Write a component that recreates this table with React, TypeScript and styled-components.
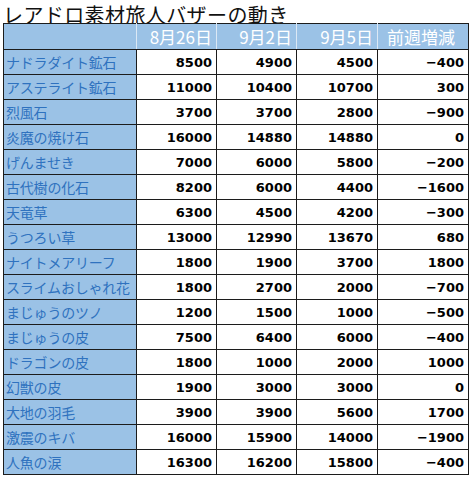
import React from 'react';
import styled, { createGlobalStyle } from 'styled-components';

const Global = createGlobalStyle`
  body {
    margin: 0;
    background: #ffffff;
    font-family: "Noto Sans CJK JP", "Noto Sans", sans-serif;
  }
`;

const Page = styled.div`
  width: 470px;
  height: 479px;
  padding-left: 3px;
  box-sizing: border-box;
`;

// line box equals the font's content area so no glyph box pokes past the top
const Title = styled.h1`
  margin: 0 0 -6px;
  line-height: 29px;
  font-size: 20px;
  font-weight: 400;
  color: #111;
  letter-spacing: 0.4px;
  white-space: nowrap;
`;

const Table = styled.table`
  position: relative;
  border-collapse: collapse;
  table-layout: fixed;
  width: 465px;
  border: 1px solid #1c1c1c;
  background: #fff;
`;

const HeadCell = styled.th<{ $light?: boolean; $center?: boolean }>`
  height: 24px;
  padding: 0 4px 0 0;
  background: #9bc2e6;
  color: #ffffff;
  font-size: 17px;
  font-weight: 400;
  text-align: ${(p) => (p.$center ? 'center' : 'right')};
  border: 1px solid #1c1c1c;
  border-left-color: ${(p) => (p.$light ? '#dbe8f5' : '#1c1c1c')};
  border-right-color: #dbe8f5;
  border-bottom-color: #1c1c1c;
  white-space: nowrap;
  &:last-child {
    border-right-color: #1c1c1c;
  }
`;

const NameCell = styled.td`
  height: 24px;
  padding: 0 0 0 2px;
  background: #9bc2e6;
  color: #2f72bf;
  font-size: 14px;
  letter-spacing: -0.2px;
  border: 1px solid #1c1c1c;
  white-space: nowrap;
  overflow: hidden;
`;

const NumCell = styled.td`
  height: 24px;
  padding: 0 4px 0 0;
  background: #ffffff;
  color: #000;
  font-family: "DejaVu Sans", "Liberation Sans", sans-serif;
  font-weight: bold;
  font-size: 13px;
  text-align: right;
  border: 1px solid #1c1c1c;
`;

type Row = [string, number, number, number, number];

const rows: Row[] = [
  ['ナドラダイト鉱石', 8500, 4900, 4500, -400],
  ['アステライト鉱石', 11000, 10400, 10700, 300],
  ['烈風石', 3700, 3700, 2800, -900],
  ['炎魔の焼け石', 16000, 14880, 14880, 0],
  ['げんませき', 7000, 6000, 5800, -200],
  ['古代樹の化石', 8200, 6000, 4400, -1600],
  ['天竜草', 6300, 4500, 4200, -300],
  ['うつろい草', 13000, 12990, 13670, 680],
  ['ナイトメアリーフ', 1800, 1900, 3700, 1800],
  ['スライムおしゃれ花', 1800, 2700, 2000, -700],
  ['まじゅうのツノ', 1200, 1500, 1000, -500],
  ['まじゅうの皮', 7500, 6400, 6000, -400],
  ['ドラゴンの皮', 1800, 1000, 2000, 1000],
  ['幻獣の皮', 1900, 3000, 3000, 0],
  ['大地の羽毛', 3900, 3900, 5600, 1700],
  ['激震のキバ', 16000, 15900, 14000, -1900],
  ['人魚の涙', 16300, 16200, 15800, -400],
];

const fmt = (n: number) => (n < 0 ? '\u2212' + Math.abs(n) : String(n));

export default function App() {
  return (
    <Page>
      <Global />
      <Title>レアドロ素材旅人バザーの動き</Title>
      <Table>
        <colgroup>
          <col style={{ width: 133 }} />
          <col style={{ width: 80 }} />
          <col style={{ width: 80 }} />
          <col style={{ width: 81 }} />
          <col style={{ width: 91 }} />
        </colgroup>
        <thead>
          <tr>
            <HeadCell />
            <HeadCell>8月26日</HeadCell>
            <HeadCell $light>9月2日</HeadCell>
            <HeadCell $light>9月5日</HeadCell>
            <HeadCell $light $center>前週増減</HeadCell>
          </tr>
        </thead>
        <tbody>
          {rows.map(([name, a, b, c, d]) => (
            <tr key={name}>
              <NameCell>{name}</NameCell>
              <NumCell>{fmt(a)}</NumCell>
              <NumCell>{fmt(b)}</NumCell>
              <NumCell>{fmt(c)}</NumCell>
              <NumCell>{fmt(d)}</NumCell>
            </tr>
          ))}
        </tbody>
      </Table>
    </Page>
  );
}
